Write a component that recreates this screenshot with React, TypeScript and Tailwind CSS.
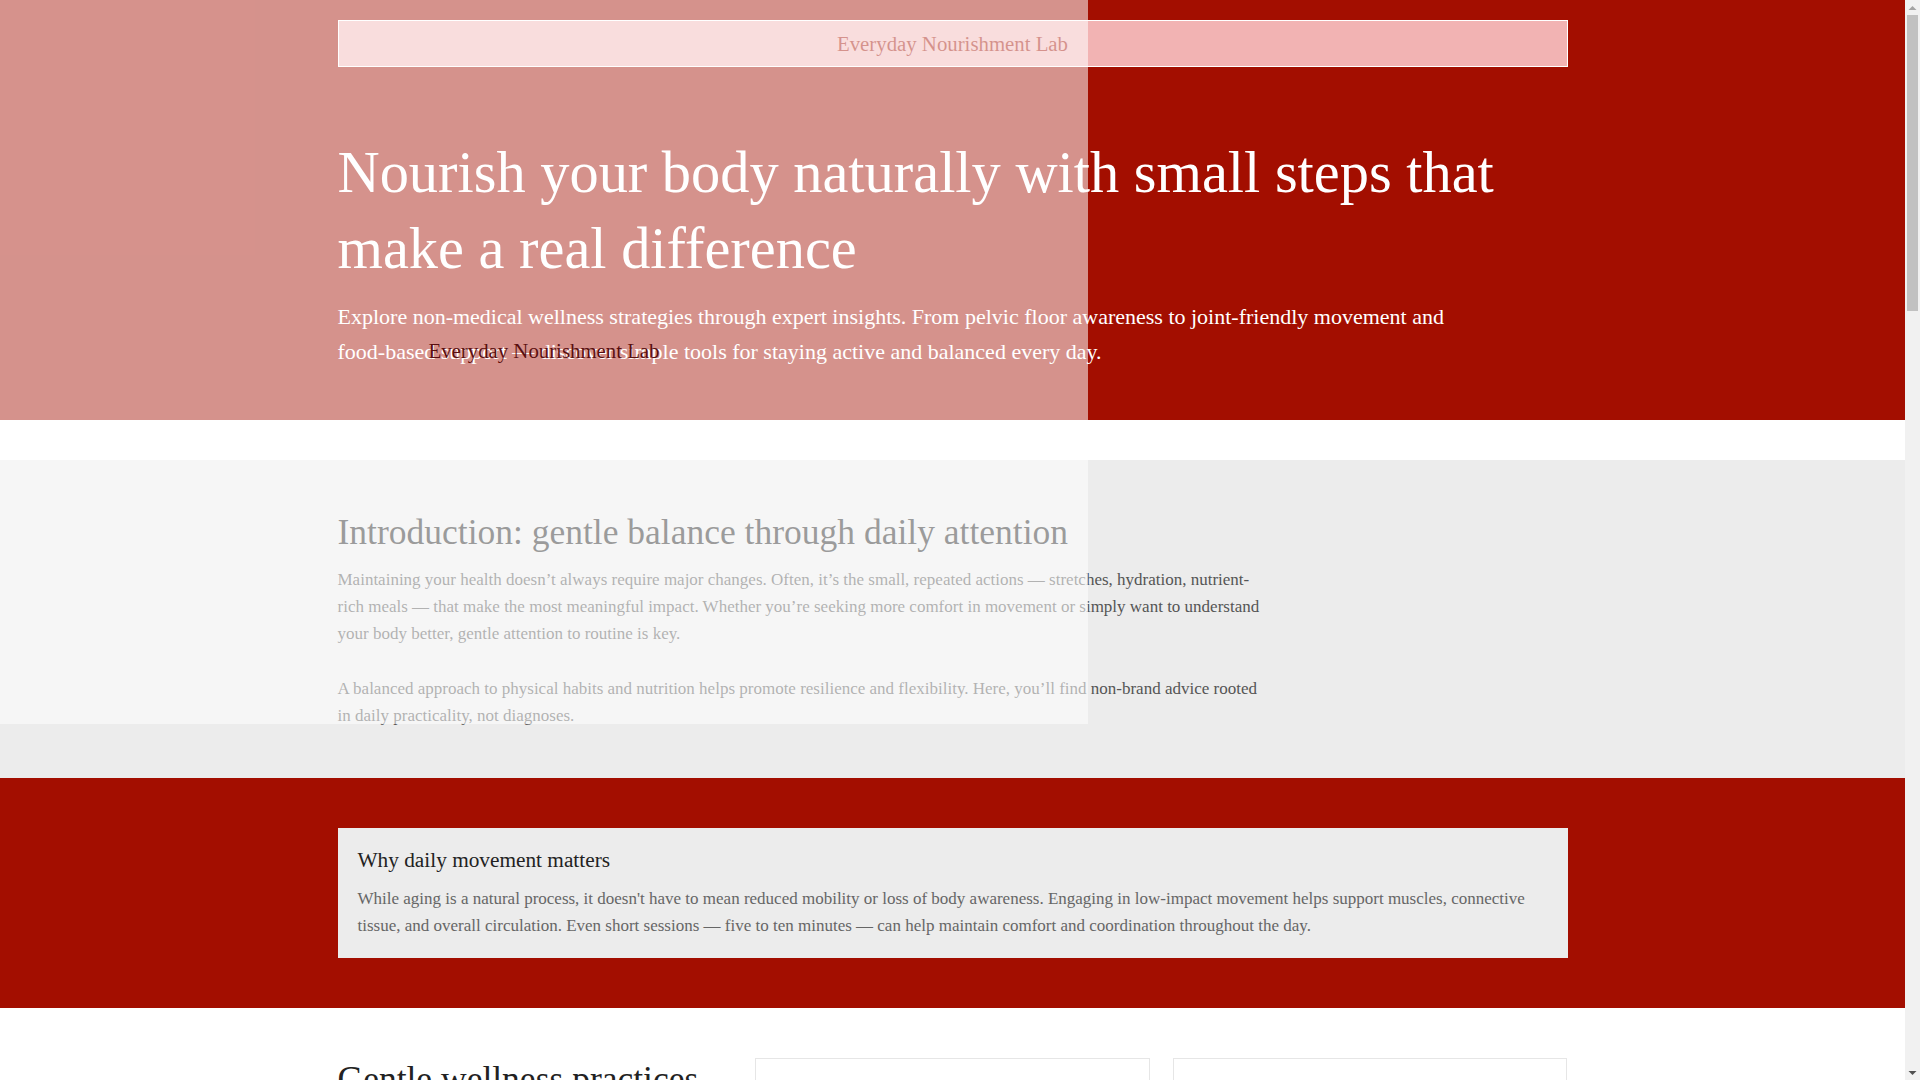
import React from "react";

const RED = "bg-[#a30e00]";

const practices = [
  {
    title: "Pelvic floor awareness",
    text: "Simple breathing and posture cues can help you notice and gently engage the muscles that support everyday stability.",
  },
  {
    title: "Joint-friendly movement",
    text: "Low-impact stretches and mobility drills keep joints comfortable without demanding intense effort or special equipment.",
  },
  {
    title: "Hydration habits",
    text: "Small reminders through the day — a glass of water with each meal — make steady hydration easier to maintain.",
  },
  {
    title: "Food-based support",
    text: "Colourful vegetables, whole grains and fermented foods offer nutrients that support digestion and overall balance.",
  },
  {
    title: "Restful evenings",
    text: "A consistent wind-down routine with light stretching helps the body recover and prepares you for a better night.",
  },
];

function Scrollbar() {
  return (
    <div className="w-[15px] shrink-0 h-full bg-[#f1f1f1] flex flex-col">
      <div className="h-[15px] flex items-center justify-center">
        <svg width="9" height="6" viewBox="0 0 9 6">
          <path d="M0.5 5 L4.5 1 L8.5 5 Z" fill="#a3a3a3" />
        </svg>
      </div>
      <div className="px-[2px]">
        <div className="h-[296px] bg-[#c1c1c1]" />
      </div>
      <div className="flex-1" />
      <div className="h-[15px] flex items-center justify-center">
        <svg width="9" height="6" viewBox="0 0 9 6">
          <path d="M0.5 1 L4.5 5 L8.5 1 Z" fill="#505050" />
        </svg>
      </div>
    </div>
  );
}

export default function App() {
  return (
    <div className="flex h-[1080px] overflow-hidden bg-white font-['Liberation_Serif','Times_New_Roman',serif]">
      <div className="relative flex-1 min-w-0 h-full overflow-hidden">
        {/* Hero */}
        <section className={`${RED} pt-[20px] pb-[51px]`}>
          <div className="w-[1230px] mx-auto">
            <div className="h-[47px] border border-white bg-[#f2b3b3] flex items-center justify-center text-[20.8px] text-[#a30e00]">
              Everyday Nourishment Lab
            </div>
            <h1 className="mt-[68px] text-[58.4px] leading-[76px] text-white font-normal">
              Nourish your body naturally with small steps that make a real difference
            </h1>
            <p className="mt-[12px] max-w-[1150px] text-[22px] leading-[35px] text-white">
              Explore non-medical wellness strategies through expert insights. From pelvic floor awareness to
              joint-friendly movement and food-based support — discover simple tools for staying active and balanced
              every day.
            </p>
          </div>
        </section>

        {/* Intro */}
        <section className="mt-[40px] bg-[#ececec] pt-[51px] pb-[49px]">
          <div className="w-[1230px] mx-auto">
            <h2 className="text-[35.5px] leading-[1.2] text-[#222] font-normal mb-[12px]">
              Introduction: gentle balance through daily attention
            </h2>
            <p className="max-w-[930px] text-[17px] leading-[27px] text-[#555] mb-[28px]">
              Maintaining your health doesn’t always require major changes. Often, it’s the small, repeated actions —
              stretches, hydration, nutrient-rich meals — that make the most meaningful impact. Whether you’re seeking
              more comfort in movement or simply want to understand your body better, gentle attention to routine is
              key.
            </p>
            <p className="max-w-[930px] text-[17px] leading-[27px] text-[#555]">
              A balanced approach to physical habits and nutrition helps promote resilience and flexibility. Here,
              you’ll find non-brand advice rooted in daily practicality, not diagnoses.
            </p>
          </div>
        </section>

        {/* Why movement */}
        <section className={`${RED} py-[50px]`}>
          <div className="w-[1230px] mx-auto bg-[#ececec] px-[20px] pt-[20px] pb-[19px]">
            <h3 className="text-[21.3px] leading-[1.2] text-[#222] font-normal mb-[12px]">
              Why daily movement matters
            </h3>
            <p className="text-[17px] leading-[27px] text-[#666]">
              While aging is a natural process, it doesn't have to mean reduced mobility or loss of body awareness.
              Engaging in low-impact movement helps support muscles, connective tissue, and overall circulation. Even
              short sessions — five to ten minutes — can help maintain comfort and coordination throughout the day.
            </p>
          </div>
        </section>

        {/* Practices */}
        <section className="pt-[50px] pb-[80px]">
          <div className="w-[1230px] mx-auto grid grid-cols-3 gap-[23px]">
            <div>
              <h2 className="text-[35.5px] leading-[1.2] text-[#222] font-normal mb-[16px]">
                Gentle wellness practices
              </h2>
              <p className="text-[17px] leading-[27px] text-[#555]">
                Practical, everyday habits that support comfort, mobility and nourishment — no equipment or special
                programmes required.
              </p>
            </div>
            {practices.map((p) => (
              <div key={p.title} className="border border-[#e6e6e6] bg-white p-[20px] min-h-[220px]">
                <h3 className="text-[21.3px] leading-[1.2] text-[#222] font-normal mb-[12px]">{p.title}</h3>
                <p className="text-[17px] leading-[27px] text-[#666]">{p.text}</p>
              </div>
            ))}
          </div>
        </section>

        {/* Nutrition */}
        <section className="bg-[#ececec] py-[60px]">
          <div className="w-[1230px] mx-auto">
            <h2 className="text-[35.5px] leading-[1.2] text-[#222] font-normal mb-[12px]">Eating for steady energy</h2>
            <p className="max-w-[930px] text-[17px] leading-[27px] text-[#555]">
              Balanced plates with protein, fibre and healthy fats help keep energy levels even through the day.
              Cooking at home a few times a week makes it easier to notice how different foods make you feel.
            </p>
          </div>
        </section>

        <footer className={`${RED} py-[40px]`}>
          <div className="w-[1230px] mx-auto flex justify-between text-white text-[17px]">
            <span>Everyday Nourishment Lab</span>
            <span>© 2024 All rights reserved</span>
          </div>
        </footer>

        {/* Overlay */}
        <div className="absolute top-0 left-0 w-[1088px] h-[724px] bg-[rgba(255,255,255,0.55)] flex justify-center pt-[339px] z-50">
          <span className="text-[20.8px] leading-[23px] h-[23px] text-[#5a0f0f]">Everyday Nourishment Lab</span>
        </div>
      </div>
      <Scrollbar />
    </div>
  );
}
